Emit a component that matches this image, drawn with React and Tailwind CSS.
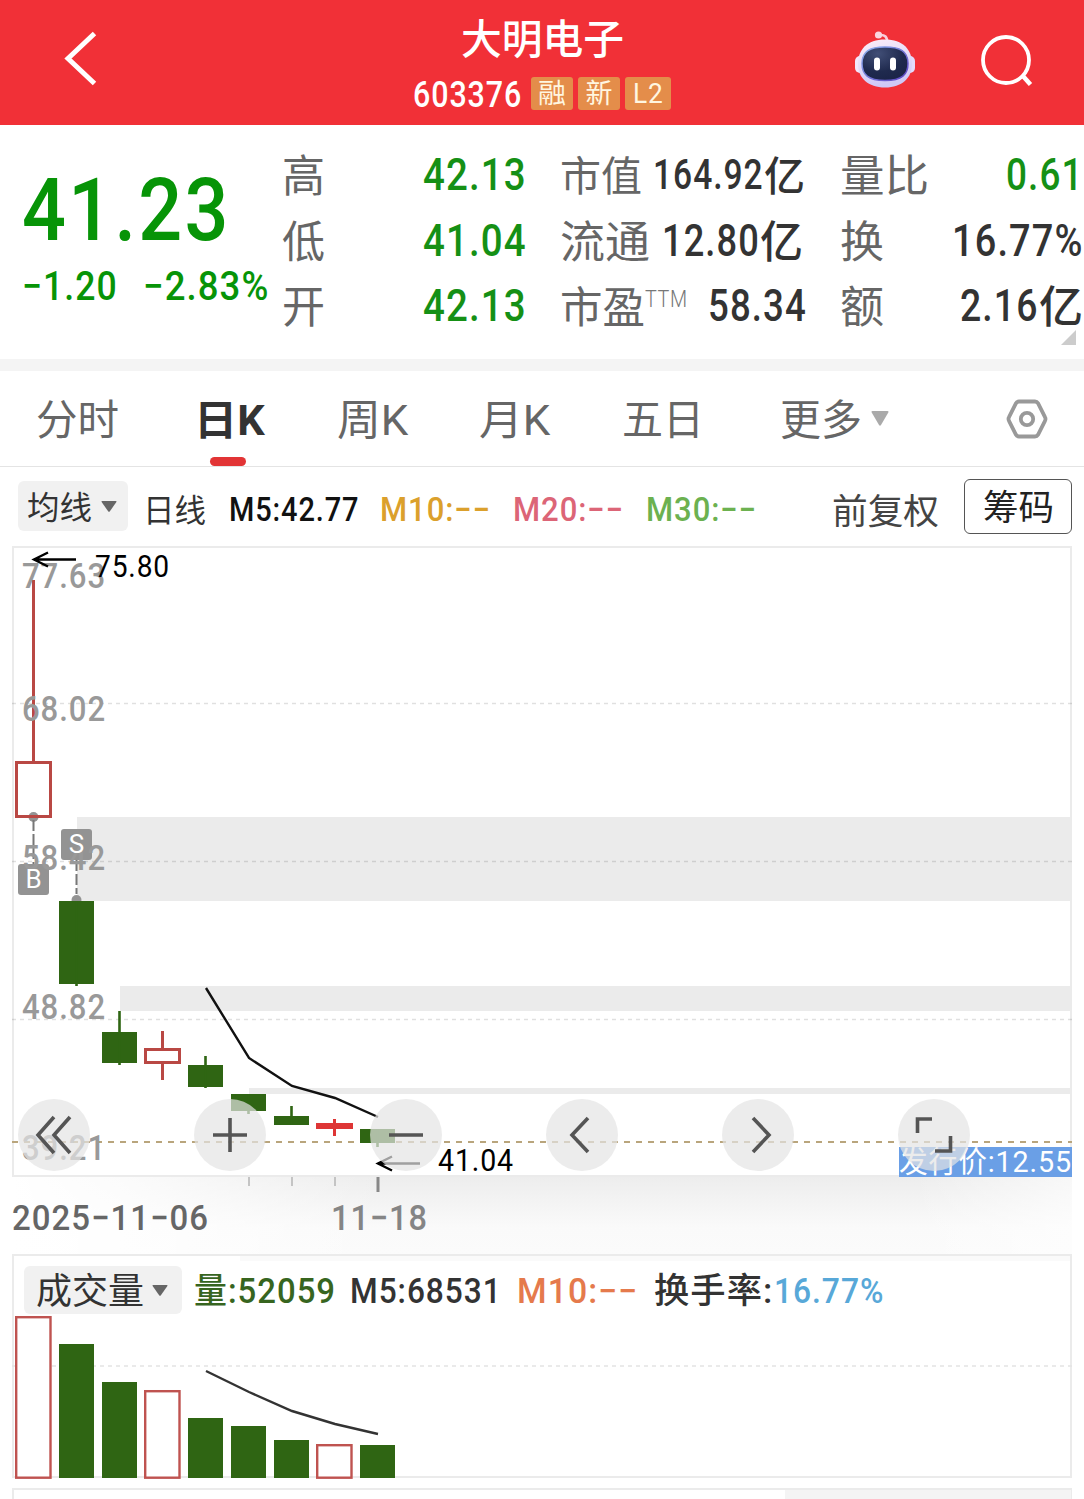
import { useLayoutEffect, useRef, useState } from "react"
import clsx from "clsx"

const hanzi = /^[\u4e00-\u9fa5K]+$/

// Squeezes its text horizontally so that it fills the width set by className
function Fit({ children, className }) {
  const outer = useRef(null)
  const inner = useRef(null)
  const [scale, setScale] = useState(1)

  useLayoutEffect(() => {
    setScale(outer.current.clientWidth / inner.current.offsetWidth)
  }, [children])

  return (
    <span ref={outer} className={clsx("block shrink-0 leading-none whitespace-nowrap", className)}>
      <span
        ref={inner}
        className={clsx("inline-block origin-left align-top", hanzi.test(children) ? "pt-[0.11em]" : "tracking-[0.03em]")}
        style={{ transform: `scaleX(${scale})` }}
      >
        {children}
      </span>
    </span>
  )
}

function Caret({ className }) {
  return (
    <svg viewBox="0 0 18 15" preserveAspectRatio="none" className={className} fill="currentColor">
      <path d="M1.5 0h15q1.5 0 .8 1.5L10 14q-1 1.500-2 0L.7 1.500Q0 0 1.500 0z" />
    </svg>
  )
}

function Robot() {
  return (
    <svg width="64" height="60" viewBox="0 0 64 60">
      <defs>
        <linearGradient id="shell" x1="0" y1="0" x2="0.3" y2="1">
          <stop offset="0" stopColor="#fdeef8" />
          <stop offset="0.5" stopColor="#e6ddf8" />
          <stop offset="1" stopColor="#cfc8f6" />
        </linearGradient>
        <linearGradient id="rim" x1="0" y1="0" x2="1" y2="1">
          <stop offset="0" stopColor="#8fb4f0" />
          <stop offset="1" stopColor="#5a3fc0" />
        </linearGradient>
        <radialGradient id="visor" cx="0.35" cy="0.2" r="0.9">
          <stop offset="0" stopColor="#414e76" />
          <stop offset="0.6" stopColor="#1f2a4e" />
          <stop offset="1" stopColor="#1a2347" />
        </radialGradient>
      </defs>
      <path d="M25 5q9-1 8 8" fill="none" stroke="#f8cfdc" strokeWidth="2.500" />
      <circle cx="24.500" cy="5" r="3.600" fill="#fbd5df" />
      <rect x="1" y="26" width="10" height="17" rx="5" fill="#f3e6fa" />
      <rect x="51" y="26" width="10" height="17" rx="5" fill="#e4dafa" />
      <path d="M31 9.500c18 0 27 10 27 24.500 0 14-10 23.500-27 23.500S4 48 4 34C4 19.500 13 9.500 31 9.500z" fill="url(#shell)" />
      <path
        d="M31 17c15 0 23 4 23 16.500 0 11-6 17-23 17s-23-6-23-17C8 21 16 17 31 17z"
        fill="url(#visor)"
        stroke="url(#rim)"
        strokeWidth="1.500"
      />
      <rect x="20" y="27.500" width="6" height="13" rx="3" fill="#fff" />
      <rect x="36" y="27.500" width="6" height="13" rx="3" fill="#fff" />
    </svg>
  )
}

function Header() {
  return (
    <header className="h-[125px] bg-[#f13037] text-white flex justify-between">
      <div className="w-[300px] pl-[62px] pt-[29px]">
        <svg width="38" height="60" viewBox="0 0 38 60" fill="none" stroke="currentColor" strokeWidth="5">
          <path d="M32.500 4.500 6 29.500l26.500 25" />
        </svg>
      </div>
      <div className="flex flex-col items-center">
        <Fit className="mt-[15px] w-[163px] text-[41px] font-medium">大明电子</Fit>
        <div className="mt-[16px] flex h-[34px] items-center">
          <Fit className="mt-[2px] w-[109px] text-[36px] font-medium">603376</Fit>
          <div className="ml-[9px] flex gap-[5px] text-[#fff6e0]">
            <span className="flex h-[33px] w-[42px] items-center justify-center rounded-[3px] bg-[#e48d4a]">
              <Fit className="w-[28px] text-[27px]">融</Fit>
            </span>
            <span className="flex h-[33px] w-[42px] items-center justify-center rounded-[3px] bg-[#e48d4a]">
              <Fit className="w-[27px] text-[27px]">新</Fit>
            </span>
            <span className="flex h-[33px] w-[46px] items-center justify-center rounded-[3px] bg-[#e48d4a]">
              <Fit className="w-[31px] text-[28px]">L2</Fit>
            </span>
          </div>
        </div>
      </div>
      <div className="flex w-[300px] justify-end gap-[63px] pr-[49px] pt-[30px]">
        <Robot />
        <svg width="54" height="60" viewBox="0 0 54 60" fill="none" stroke="currentColor" strokeWidth="3.800">
          <circle cx="25" cy="30" r="23" />
          <path d="m41 45 8.500 9.500" strokeWidth="4.500" />
        </svg>
      </div>
    </header>
  )
}

function Quote() {
  return (
    <section className="flex h-[234px] pt-[17px] text-[44px] font-medium text-[#333]">
      <div className="w-[282px] pl-[22px] pt-[24px] text-[#079407]">
        <Fit className="w-[209px] text-[88px]">41.23</Fit>
        <div className="mt-[13px] flex gap-[25px]">
          <Fit className="w-[96px] text-[40px]">−1.20</Fit>
          <Fit className="w-[126px] text-[40px]">−2.83%</Fit>
        </div>
      </div>

      <div className="w-[245px]">
        <div className="flex h-[66px] items-center justify-between">
          <Fit className="w-[43px] font-normal text-[#666]">高</Fit>
          <Fit className="w-[104px] text-[#159015]">42.13</Fit>
        </div>
        <div className="flex h-[65px] items-center justify-between">
          <Fit className="w-[43px] font-normal text-[#666]">低</Fit>
          <Fit className="w-[104px] text-[#159015]">41.04</Fit>
        </div>
        <div className="flex h-[66px] items-center justify-between">
          <Fit className="w-[43px] font-normal text-[#666]">开</Fit>
          <Fit className="w-[104px] text-[#159015]">42.13</Fit>
        </div>
      </div>

      <div className="ml-[33px] w-[246px]">
        <div className="flex h-[66px] items-center">
          <Fit className="w-[82px] text-[41px] font-normal text-[#666]">市值</Fit>
          <Fit className="ml-[11px] w-[111px] text-[42px]">164.92</Fit>
          <Fit className="w-[41px] text-[41px]">亿</Fit>
        </div>
        <div className="flex h-[65px] items-center">
          <Fit className="w-[90px] font-normal text-[#666]">流通</Fit>
          <Fit className="ml-[12px] w-[98px]">12.80</Fit>
          <Fit className="w-[43px]">亿</Fit>
        </div>
        <div className="flex h-[66px] items-center">
          <Fit className="w-[85px] text-[43px] font-normal text-[#666]">市盈</Fit>
          <Fit className="-mt-[14px] w-[43px] text-[23px] font-light text-[#777]">TTM</Fit>
          <Fit className="ml-[20px] w-[99px]">58.34</Fit>
        </div>
      </div>

      <div className="relative ml-[34px] w-[244px]">
        <div className="flex h-[66px] items-center justify-between">
          <Fit className="w-[89px] font-normal text-[#666]">量比</Fit>
          <Fit className="w-[78px] text-[#159015]">0.61</Fit>
        </div>
        <div className="flex h-[65px] items-center justify-between">
          <Fit className="w-[44px] font-normal text-[#666]">换</Fit>
          <Fit className="w-[132px]">16.77%</Fit>
        </div>
        <div className="flex h-[66px] items-center">
          <Fit className="w-[44px] font-normal text-[#666]">额</Fit>
          <Fit className="ml-[76px] w-[79px]">2.16</Fit>
          <Fit className="w-[44px]">亿</Fit>
        </div>
        <svg className="absolute right-[8px] top-[188px]" width="15" height="15" viewBox="0 0 15 15">
          <path d="M15 0v15H0z" fill="#ccc" />
        </svg>
      </div>
    </section>
  )
}

function Tabs() {
  return (
    <nav className="flex h-[96px] items-center border-b border-[#e4e4e4] pl-[36px] text-[42px] text-[#666]">
      <Fit className="w-[83px]">分时</Fit>
      <div className="relative ml-[75px]">
        <Fit className="w-[71px] font-bold text-[#333]">日K</Fit>
        <span className="absolute left-[16px] top-[62px] h-[9px] w-[36px] rounded-full bg-[#e23435]" />
      </div>
      <Fit className="ml-[72px] w-[71px]">周K</Fit>
      <Fit className="ml-[71px] w-[71px]">月K</Fit>
      <Fit className="ml-[72px] w-[82px]">五日</Fit>
      <Fit className="ml-[76px] w-[82px]">更多</Fit>
      <Caret className="ml-[9px] h-[15px] w-[18px] text-[#aaa]" />
      <svg className="ml-[117px]" width="42" height="42" viewBox="0 0 42 42" fill="none" stroke="#999" strokeWidth="3.800">
        <path d="M13 3.500h16q2 0 3 1.700l7 14q1 1.800 0 3.600l-7 14q-1 1.700-3 1.700H13q-2 0-3-1.700l-7-14q-1-1.800 0-3.600l7-14q1-1.700 3-1.700z" />
        <circle cx="21" cy="21" r="6.200" />
      </svg>
    </nav>
  )
}

function Indicators() {
  return (
    <div className="flex h-[79px] items-center pl-[18px] text-[33px] font-medium">
      <div className="-mt-[1px] flex h-[50px] w-[110px] items-center rounded-[6px] bg-[#f1f1f1] pl-[9px]">
        <Fit className="w-[65px] text-[32px] font-normal text-[#333]">均线</Fit>
        <Caret className="ml-[9px] h-[11px] w-[16px] text-[#666]" />
      </div>
      <Fit className="ml-[15px] mt-[5px] w-[63px] text-[32px] font-normal text-[#333]">日线</Fit>
      <Fit className="ml-[23px] mt-[6px] w-[130px] text-[#111]">M5:42.77</Fit>
      <Fit className="ml-[21px] mt-[6px] w-[111px] text-[#dba02c]">M10:−−</Fit>
      <Fit className="ml-[22px] mt-[6px] w-[111px] text-[#dc6577]">M20:−−</Fit>
      <Fit className="ml-[22px] mt-[6px] w-[111px] text-[#6cb150]">M30:−−</Fit>
      <Fit className="ml-[75px] mt-[9px] w-[107px] text-[35px] font-normal text-[#444]">前复权</Fit>
      <div className="ml-[25px] flex h-[55px] w-[108px] items-center justify-center rounded-[6px] border border-[#555]">
        <Fit className="w-[71px] text-[35px] font-normal text-[#222]">筹码</Fit>
      </div>
    </div>
  )
}

const GREEN = "#2f6513"
const RED = "#b94844"

// left edge, open/close box and wick extents of each green day
const downDays = [
  { x: 59, top: 901, bottom: 984, high: 901, low: 986 },
  { x: 102, top: 1032, bottom: 1063, high: 1011, low: 1065 },
  { x: 188, top: 1065, bottom: 1087, high: 1056, low: 1088 },
  { x: 231, top: 1094, bottom: 1111, high: 1094, low: 1114 },
  { x: 274, top: 1116, bottom: 1125, high: 1106, low: 1125 },
  { x: 360, top: 1129, bottom: 1143, high: 1129, low: 1147 },
]

const priceLabels = [
  ["77.63", 588],
  ["68.02", 721],
  ["58.42", 870],
  ["48.82", 1019],
  ["39.21", 1160],
]

const tools = [
  "M36 18 20 36l16 18M52 18 36 36l16 18",
  "M19 36h34M36 19v34",
  "M19 36h34",
  "M42 19 26 36l16 17",
  "M31 19l16 17-16 17",
  "M19.500 34V20H34M37 52h15.500V37",
]

function Label({ x, y, w, size, children, ...rest }) {
  return (
    <text x={x} y={y} fontSize={size} textLength={w} lengthAdjust="spacingAndGlyphs" letterSpacing={size * 0.03} {...rest}>
      {children}
    </text>
  )
}

function KLine() {
  return (
    <div className="relative h-[708px]">
      <svg width="1084" height="708" viewBox="0 546 1084 708" className="block">
        <defs>
          <linearGradient id="shadeDown" x1="0" y1="0" x2="0" y2="1">
            <stop offset="0" stopColor="#ededed" />
            <stop offset="0.300" stopColor="#f3f3f3" />
            <stop offset="0.650" stopColor="#fafafa" />
            <stop offset="1" stopColor="#fbfbfb" />
          </linearGradient>
          <linearGradient id="shadeLeft" x1="0" y1="0" x2="1" y2="0">
            <stop offset="0" stopColor="#fff" />
            <stop offset="0.100" stopColor="#fff" stopOpacity="0.800" />
            <stop offset="0.350" stopColor="#fff" stopOpacity="0" />
            <stop offset="0.850" stopColor="#fff" stopOpacity="0" />
            <stop offset="1" stopColor="#fff" stopOpacity="0.600" />
          </linearGradient>
        </defs>
        <rect x="12" y="1177" width="1060" height="77" fill="url(#shadeDown)" />
        <rect x="12" y="1177" width="1060" height="77" fill="url(#shadeLeft)" />

        <rect x="13" y="547" width="1058" height="629" fill="#fff" stroke="#ebebeb" strokeWidth="2" />

        {/* Price gaps */}
        <g fill="#ebebeb">
          <rect x="77" y="817" width="995" height="84" />
          <rect x="120" y="986" width="952" height="25" />
          <rect x="249" y="1088" width="823" height="6" />
        </g>
        <path
          d="M12 703.500h1060M12 861.500h1060M12 1019.500h1060"
          stroke="#000"
          strokeOpacity="0.120"
          strokeWidth="1.300"
          strokeDasharray="4 4"
        />
        <path d="M12 1142h1060" stroke="#b9a57c" strokeWidth="2" strokeDasharray="6 6" />

        {/* Buy and sell markers */}
        <g fill="#939393">
          <circle cx="33.500" cy="817" r="5" />
          <circle cx="76.500" cy="900" r="5" />
          <path d="M33.500 820v44M76.500 860v34" stroke="#777" strokeWidth="2" strokeDasharray="11 3" />
          <rect x="18" y="864" width="31" height="31" rx="3" />
          <rect x="61" y="829" width="31" height="31" rx="3" />
        </g>

        {/* Candles */}
        <g fill="none" stroke={RED} strokeWidth="3">
          <path d="M33.500 580v182M162.500 1031v17M162.500 1064v16" />
          <rect x="16.500" y="762.500" width="34" height="54" />
          <rect x="145.500" y="1049.500" width="34" height="13" />
        </g>
        <path d="M316 1123h37v6h-37zM333 1119h3v17h-3z" fill="#de3535" />
        {downDays.map((d) => (
          <g key={d.x} fill={GREEN}>
            <rect x={d.x} y={d.top} width="35" height={d.bottom - d.top} />
            <rect x={d.x + 16.2} y={d.high} width="2.600" height={d.low - d.high} />
          </g>
        ))}
        <path d="M206 988l43 70 43 28 43 12 43 19" fill="none" stroke="#111" strokeWidth="2.400" />

        <g fill="#999" fontWeight="500">
          {priceLabels.map(([price, y]) => (
            <Label key={price} x={22} y={y} w={84} size={35.5}>
              {price}
            </Label>
          ))}
        </g>
        <g fill="#fff" fontSize="26" textAnchor="middle">
          <text x="33.500" y="888">B</text>
          <text x="76.500" y="853">S</text>
        </g>

        <g fill="none" stroke="#000" strokeWidth="2.400">
          <path d="M76 559.500H34M48 552.500l-14 7 14 7" />
          <path d="M420 1163.500h-42M392 1156.500l-14 7 14 7" />
        </g>
        <Label x={95} y={577} w={75} size={30.5}>75.80</Label>
        <Label x={438} y={1171} w={76} size={30.5}>41.04</Label>

        <rect x="899" y="1147" width="173" height="30" fill="#6a9fe6" />
        <Label x={899} y={1172} w={173} size={30} fill="#fff">发行价:12.55</Label>

        <path d="M249 1177v9M292 1177v9M335 1177v9" stroke="#c4c4c4" strokeWidth="2" />
        <path d="M378 1177v15" stroke="#888" strokeWidth="3" />
        <g fontWeight="500">
          <Label x={12} y={1230} w={197} size={35.5} fill="#666">2025−11−06</Label>
          <Label x={331} y={1230} w={97} size={35.5} fill="#858585">11−18</Label>
        </g>
      </svg>

      {/* Chart tools */}
      <div className="absolute left-[18px] top-[553px] flex gap-[104px]">
        {tools.map((d) => (
          <button key={d} className="h-[72px] w-[72px] rounded-full bg-[#e4e4e4]/70">
            <svg width="72" height="72" viewBox="0 0 72 72" fill="none" stroke="#555" strokeWidth="3.600">
              <path d={d} />
            </svg>
          </button>
        ))}
      </div>
    </div>
  )
}

const volumes = [
  { x: 15, top: 1316, up: true },
  { x: 59, top: 1344 },
  { x: 102, top: 1382 },
  { x: 144, top: 1390, up: true },
  { x: 188, top: 1418 },
  { x: 231, top: 1426 },
  { x: 274, top: 1440 },
  { x: 316, top: 1444, up: true },
  { x: 360, top: 1445 },
]

function Volume() {
  return (
    <section className="relative h-[245px] overflow-hidden">
      <svg width="1084" height="245" viewBox="0 1254 1084 245" className="absolute inset-0">
        <rect x="13" y="1255" width="1058" height="222" fill="#fff" stroke="#ebebeb" strokeWidth="2" />
        <rect x="240" y="1256" width="830" height="5" fill="#fafafa" />
        <path d="M12 1366h1060" stroke="#e4e4e4" strokeWidth="1.600" strokeDasharray="4 4" />
        {volumes.map((v) =>
          v.up ? (
            <rect
              key={v.x}
              x={v.x + 1.2}
              y={v.top + 1.2}
              width="34.300"
              height={1477.5 - v.top - 1}
              fill="#fff"
              stroke="#bf5350"
              strokeWidth="2.400"
            />
          ) : (
            <rect key={v.x} x={v.x} y={v.top} width="35" height={1478 - v.top} fill={GREEN} />
          )
        )}
        <path d="M206 1371l43 21 43 19 43 13 43 10" fill="none" stroke="#333" strokeWidth="2.400" />
        <rect x="13" y="1489" width="1058" height="20" fill="#fff" stroke="#ebebeb" strokeWidth="2" />
        <rect x="785" y="1490" width="286" height="9" fill="#f4f4f4" />
      </svg>

      <div className="relative flex items-center pl-[24px] pt-[12px] text-[35px] font-medium text-[#333]">
        <div className="flex h-[48px] w-[158px] items-center rounded-[6px] bg-[#f1f1f1] pl-[12px]">
          <Fit className="w-[108px] text-[36px] font-normal">成交量</Fit>
          <Caret className="ml-[8px] h-[11px] w-[16px] text-[#666]" />
        </div>
        <Fit className="ml-[12px] mt-[3px] w-[142px] text-[#37651f]">量:52059</Fit>
        <Fit className="ml-[14px] mt-[3px] w-[152px]">M5:68531</Fit>
        <Fit className="ml-[15px] mt-[3px] w-[121px] text-[#e57a4c]">M10:−−</Fit>
        <Fit className="ml-[16px] mt-[3px] w-[119px]">换手率:</Fit>
        <Fit className="ml-[1px] mt-[3px] w-[110px] text-[#58a8d8]">16.77%</Fit>
      </div>
    </section>
  )
}

export default function App() {
  return (
    <main className="h-[1499px] w-[1084px] overflow-hidden bg-white font-[Roboto,'Noto_Sans_CJK_SC',sans-serif]">
      <Header />
      <Quote />
      <div className="h-[12px] bg-[#f4f4f4]" />
      <Tabs />
      <Indicators />
      <KLine />
      <Volume />
    </main>
  )
}
